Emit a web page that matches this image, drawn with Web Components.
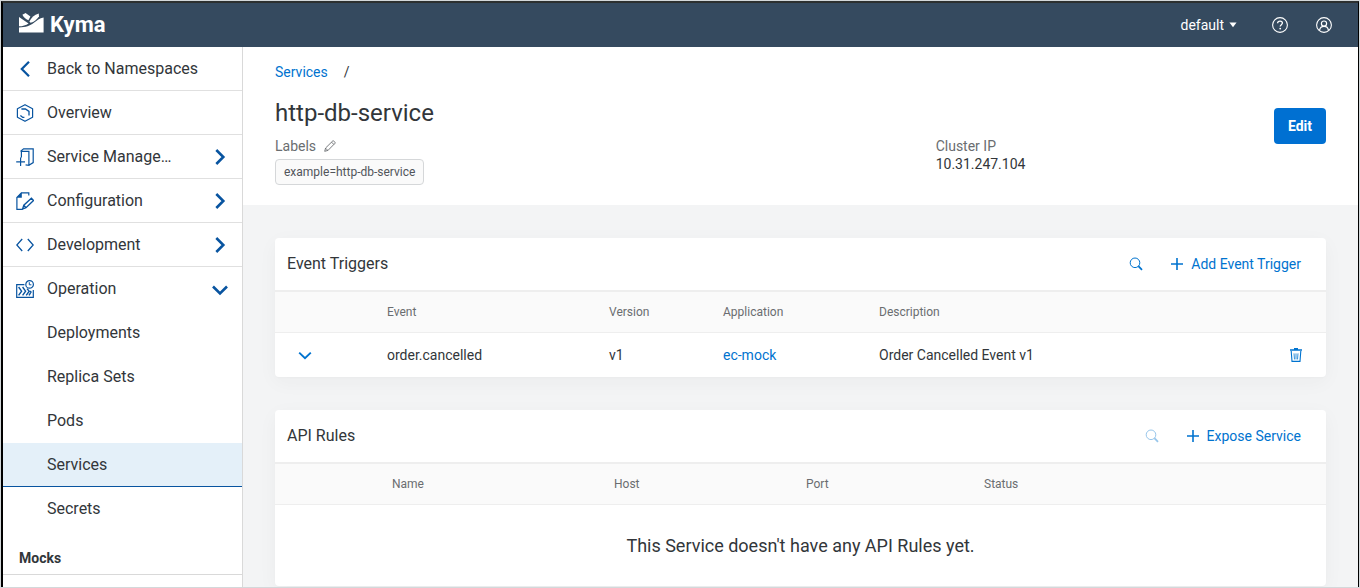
<!DOCTYPE html>
<html lang="en">
<head>
<meta charset="utf-8">
<title>Kyma Console - http-db-service</title>
<style>
  html, body { margin: 0; height: 100%; }
  body { background: #d3d8da; font-family: Roboto, "Noto Sans", sans-serif; font-size: 14px; line-height: 20px; color: #32363a; }
</style>
</head>
<body>
<kyma-app>
  <kyma-topbar slot="top"></kyma-topbar>
  <side-nav slot="nav">
    <nav-item icon="back">Back to Namespaces</nav-item>
    <nav-item icon="overview">Overview</nav-item>
    <nav-item icon="catalog" end="right">Service Manage…</nav-item>
    <nav-item icon="config" end="right">Configuration</nav-item>
    <nav-item icon="code" end="right">Development</nav-item>
    <nav-item icon="operation" end="down" plain>Operation</nav-item>
    <nav-item sub plain>Deployments</nav-item>
    <nav-item sub plain>Replica Sets</nav-item>
    <nav-item sub plain>Pods</nav-item>
    <nav-item sub plain active>Services</nav-item>
    <nav-item sub plain>Secrets</nav-item>
    <nav-heading>Mocks</nav-heading>
  </side-nav>
  <page-header></page-header>
  <page-body>
    <event-triggers></event-triggers>
    <api-rules></api-rules>
  </page-body>
</kyma-app>

<script>
const ICONS = {
  logo: ['0 0 25 20', '<g fill="#fff"><path d="M0 4 9.6 10.4C7 12.4 3.5 13.1 0 13.3Z"/><path d="M3.4 1.8 6.6 0 11.4 3.4 9.4 7.2C6.6 6.2 4.6 4.4 3.4 1.8Z"/><path d="M10.4 8.6C12 4.6 15.4 1.6 19.8.4L20 3.4C18 6.4 15 8.8 11.6 9.8Z"/><path d="M0 14.5C7 14.3 11 12.8 14.6 10 18 7.4 20.4 5 24.6 4.4V19.4H0Z"/></g>'],
  back: ['0 0 18 18', '<path d="M13 1.8 5.8 9l7.2 7.2" fill="none" stroke="currentColor" stroke-width="2.2"/>'],
  overview: ['0 0 18 18', '<path d="M9 .7 16.6 4.7V13.3L9 17.3 1.4 13.3V4.7Z" fill="none" stroke="currentColor" stroke-width="1.2" stroke-linejoin="round"/><path d="M5.4 5H9.4L13 7.4V11.6M4.4 11.4 6.8 13.4H8.4" fill="none" stroke="currentColor" stroke-width="1.3"/>'],
  catalog: ['0 0 18 18', '<path d="M5.4 9.6V3.4H12.9V17.3L9.6 16.9M4.4 3.4 7.6.8H17.2V14.6L12.9 17.3M4.6 9.6V18M.2 13.9H9" fill="none" stroke="currentColor" stroke-width="1.2"/>'],
  config: ['0 0 18 18', '<path d="M6.6 17.3H.9V5.4L5.4.8H12.8V3.4" fill="none" stroke="currentColor" stroke-width="1.2"/><path d="M.6 5.8 5.8.4V5.8Z" fill="currentColor"/><path d="M6.6 17 7.8 13.2 15.4 6.2 17.5 8.5 10 15.6ZM7.8 13.2 10 15.6" fill="none" stroke="currentColor" stroke-width="1.3"/>'],
  code: ['0 0 18 18', '<path d="M6.2 3 .8 9 6.2 15M11.8 3l5.4 6-5.4 6" fill="none" stroke="currentColor" stroke-width="1.3"/>'],
  operation: ['0 0 18 18', '<path d="M8.4 4.6H.7V17.4H17.3V10" fill="none" stroke="currentColor" stroke-width="1.2"/><path d="m2.6 7 3 4.2-3 4.2M6.6 7l3 4.2-3 4.2M11 8.6l2.2 2.6-3 4.2M14.2 11l.8 1-2 3.4" fill="none" stroke="currentColor" stroke-width="1.4"/><circle cx="13.6" cy="4.4" r="3.8" fill="none" stroke="currentColor" stroke-width="1.2"/><path d="M13.3 2.2V4.8H15.4" fill="none" stroke="currentColor"/>'],
  right: ['0 0 20 20', '<path d="M6.3 3 13.3 10l-7 7" fill="none" stroke="currentColor" stroke-width="2.6"/>'],
  down: ['0 0 20 20', '<path d="M3 7.5 10 14.5l7-7" fill="none" stroke="currentColor" stroke-width="2.6"/>'],
  caret: ['0 0 8 6', '<path d="M.4.6H7.6L4 5.2Z" fill="currentColor"/>'],
  help: ['0 0 16 16', '<circle cx="8" cy="8" r="7.4" fill="none" stroke="currentColor" stroke-width="1.1"/><path d="M5.6 6.2C5.7 4.8 6.6 4.1 8 4.1S10.4 4.9 10.4 6.1C10.4 7.7 8.2 7.7 8.2 9.6" fill="none" stroke="currentColor" stroke-width="1.3"/><circle cx="8.2" cy="11.6" r=".9" fill="currentColor"/>'],
  user: ['0 0 16 16', '<circle cx="8" cy="8" r="7.4" fill="none" stroke="currentColor" stroke-width="1.1"/><circle cx="8" cy="6.6" r="2.6" fill="none" stroke="currentColor" stroke-width="1.2"/><path d="M3.6 13.2C4 10.8 5.6 9.4 8 9.4S12 10.8 12.4 13.2" fill="none" stroke="currentColor" stroke-width="1.2"/>'],
  pencil: ['0 0 12 12', '<path d="M.7 11.3 1.6 8 8.8.9C9.6.4 11.6 2.4 11.1 3.2L4 10.4ZM7.6 2.2 9.8 4.4M1.6 8.2 3.8 10.4" fill="none" stroke="currentColor" stroke-width=".9"/>'],
  search: ['0 0 14 14', '<circle cx="6" cy="5.8" r="4.8" fill="none" stroke="currentColor" stroke-width="1"/><path d="M9.4 9.2 13 12.8" stroke="currentColor" stroke-width="1.8"/>'],
  plus: ['0 0 12 12', '<path d="M6 0V12M0 6H12" stroke="currentColor" stroke-width="1.6"/>'],
  expand: ['0 0 14 14', '<path d="M1.2 4.6 7 10.2l5.8-5.6" fill="none" stroke="currentColor" stroke-width="1.9"/>'],
  trash: ['0 0 14 16', '<path d="M1 3H13M5 1.8H9" stroke="currentColor" stroke-width="1.4" fill="none"/><path d="M2.2 4 3 14.4H11L11.8 4" fill="none" stroke="currentColor" stroke-width="1.1"/><path d="M5 6.4 5.5 12.4M7 6.4v6M9 6.4 8.5 12.4" stroke="currentColor" stroke-width=".8"/>']
};

function define(name, render) {
  customElements.define(name, class extends HTMLElement {
    constructor() {
      super();
      this.attachShadow({ mode: 'open' });
    }
    connectedCallback() {
      this.shadowRoot.innerHTML = render(this);
    }
  });
}

const CONTROLS = `
  * { box-sizing: border-box; }
  a { color: #0073cf; text-decoration: none; }
  button { font: inherit; color: #0073cf; background: none; border: 0; padding: 0; margin: 0; cursor: pointer; }
`;

const TABLE = `
  table { width: 100%; border-collapse: separate; border-spacing: 0; table-layout: fixed; }
  th, td { padding: 0 12px; text-align: left; vertical-align: middle; }
  th { height: 41px; background: #fafafa; border-bottom: 1px solid #eee; font-size: 12px; font-weight: 400; line-height: 16px; color: #6a6d70; }
  td { height: 44px; font-size: 14px; }
`;

define('ui-icon', el => {
  const [box, body] = ICONS[el.getAttribute('name')];
  const [, , w, h] = box.split(' ');
  return `<style>:host { display: inline-flex; flex: none; } svg { display: block; }</style>
    <svg viewBox="${box}" width="${w}" height="${h}" aria-hidden="true">${body}</svg>`;
});

define('kyma-app', () => `
  <style>
    :host { box-sizing: border-box; display: flex; flex-direction: column; height: 100vh; padding: 1px; overflow: hidden; }
    .frame { flex: 1; min-height: 0; display: flex; flex-direction: column; overflow: hidden; border: solid #000; border-width: 2px 1px 0 2px; border-top-color: #2c3030; background: #f3f4f5; }
    .columns { flex: 1; min-height: 0; display: flex; }
    main { flex: 1; min-width: 0; overflow: hidden; }
  </style>
  <div class="frame">
    <slot name="top"></slot>
    <div class="columns">
      <slot name="nav"></slot>
      <main><slot></slot></main>
    </div>
  </div>`);

define('kyma-topbar', () => `
  <style>
    ${CONTROLS}
    :host { display: block; flex: none; }
    header { height: 44px; display: flex; align-items: center; padding: 0 12px 0 16px; background: #354a5f; color: #fff; }
    .brand { display: flex; align-items: center; gap: 6px; margin-right: auto; color: #fff; font-size: 22px; font-weight: 700; }
    .brand ui-icon { margin-bottom: 4px; }
    .picker { display: flex; align-items: center; margin-right: 21px; position: relative; }
    select { appearance: none; field-sizing: content; border: 0; margin: 0; padding: 0 13px 0 0; background: transparent; color: inherit; font: inherit; }
    .picker ui-icon { position: absolute; right: 0; pointer-events: none; }
    button { width: 44px; height: 44px; display: flex; align-items: center; justify-content: center; color: #fff; }
  </style>
  <header>
    <a class="brand" href="#home"><ui-icon name="logo"></ui-icon>Kyma</a>
    <div class="picker">
      <select aria-label="Namespace"><option>default</option></select>
      <ui-icon name="caret"></ui-icon>
    </div>
    <button aria-label="Help"><ui-icon name="help"></ui-icon></button>
    <button aria-label="Profile"><ui-icon name="user"></ui-icon></button>
  </header>`);

define('side-nav', () => `
  <style>
    :host { box-sizing: border-box; flex: none; width: 240px; display: block; overflow: hidden; background: #fff; border-right: 1px solid #d9d9d9; }
    nav { display: flex; flex-direction: column; }
  </style>
  <nav><slot></slot></nav>`);

define('nav-item', el => `
  <style>
    ${CONTROLS}
    :host { display: block; }
    a { height: 44px; display: flex; align-items: center; gap: 13px; padding: 0 12px 0 13px; border-bottom: 1px solid #e0e0e0; color: #32363a; font-size: 16px; white-space: nowrap; }
    ui-icon { color: #0854a0; }
    span { flex: 1; }
    :host([plain]) a { border-bottom-color: transparent; }
    :host([sub]) a { padding-left: 44px; }
    :host([active]) a { background: #e4f0f9; border-bottom-color: #0854a0; }
  </style>
  <a href="#nav"${el.hasAttribute('active') ? ' aria-current="page"' : ''}>
    ${el.hasAttribute('icon') ? `<ui-icon name="${el.getAttribute('icon')}"></ui-icon>` : ''}
    <span><slot></slot></span>
    ${el.hasAttribute('end') ? `<ui-icon name="${el.getAttribute('end')}"></ui-icon>` : ''}
  </a>`);

define('nav-heading', () => `
  <style>
    :host { display: block; }
    h2 { box-sizing: border-box; height: 44px; margin: 0; padding: 17px 16px 0; border-bottom: 1px solid #d9d9d9; font-size: 14px; font-weight: 700; line-height: 20px; }
  </style>
  <h2><slot></slot></h2>`);

define('page-header', () => `
  <style>
    ${CONTROLS}
    :host { display: block; background: #fff; }
    header { padding: 15px 32px 20px; }
    .crumbs { display: flex; gap: 16px; margin-bottom: 15px; }
    .row { display: flex; align-items: flex-start; gap: 8px; }
    .info { flex: 1; display: grid; grid-template-columns: 2fr 1fr; row-gap: 8px; }
    h1 { grid-column: 1 / -1; margin: 0; font-size: 24px; font-weight: 400; line-height: 32px; }
    .field { line-height: 18px; }
    .name { display: flex; align-items: center; gap: 8px; color: #6a6d70; }
    .name button { color: #6a6d70; display: flex; }
    .tag { display: inline-block; margin-top: 4px; padding: 3px 8px; border: 1px solid #d5d7d9; border-radius: 4px; background: #fafafa; color: #51555a; font-size: 12px; }
    .edit { min-width: 52px; margin-top: 11px; height: 36px; padding: 0 12px; border-radius: 4px; background: #0070d2; color: #fff; font-weight: 700; }
  </style>
  <header>
    <nav class="crumbs" aria-label="Breadcrumb"><a href="#services">Services</a><span>/</span></nav>
    <div class="row">
      <div class="info">
        <h1>http-db-service</h1>
        <div class="field">
          <div class="name">Labels <button aria-label="Edit labels"><ui-icon name="pencil"></ui-icon></button></div>
          <div class="tag">example=http-db-service</div>
        </div>
        <div class="field">
          <div class="name">Cluster IP</div>
          <div>10.31.247.104</div>
        </div>
      </div>
      <button class="edit">Edit</button>
    </div>
  </header>`);

define('page-body', () => `
  <style>:host { display: flex; flex-direction: column; gap: 33px; padding: 33px 32px; }</style>
  <slot></slot>`);

define('data-panel', () => `
  <style>
    :host { display: block; background: #fff; border-radius: 4px; box-shadow: 0 5px 20px rgba(50, 54, 58, .04), 0 1px 2px rgba(50, 54, 58, .02); overflow: hidden; }
    header { height: 52px; display: flex; align-items: center; padding: 0 25px 0 12px; border-bottom: 2px solid #eee; }
    h3 { margin: 0 auto 0 0; font-size: 16px; font-weight: 400; }
  </style>
  <header><h3><slot name="title"></slot></h3><slot name="actions"></slot></header>
  <slot></slot>`);

define('panel-actions', el => `
  <style>
    ${CONTROLS}
    :host { display: flex; align-items: center; gap: 28px; }
    button { display: flex; align-items: center; gap: 8px; }
    button:disabled { opacity: .4; }
  </style>
  <button aria-label="Search"${el.hasAttribute('nosearch') ? ' disabled' : ''}><ui-icon name="search"></ui-icon></button>
  <button><ui-icon name="plus"></ui-icon><slot></slot></button>`);

define('event-triggers', () => `
  <style>
    ${CONTROLS}
    ${TABLE}
    :host { display: block; }
    td button { display: flex; }
    .expand { padding-left: 11px; }
    .remove { margin-left: auto; padding-right: 11px; }
  </style>
  <data-panel>
    <span slot="title">Event Triggers</span>
    <panel-actions slot="actions">Add Event Trigger</panel-actions>
    <table>
      <colgroup><col style="width:100px"><col style="width:222px"><col style="width:114px"><col style="width:156px"><col><col style="width:80px"></colgroup>
      <thead><tr><th></th><th>Event</th><th>Version</th><th>Application</th><th>Description</th><th></th></tr></thead>
      <tbody><tr>
        <td><button class="expand" aria-label="Expand"><ui-icon name="expand"></ui-icon></button></td>
        <td>order.cancelled</td><td>v1</td><td><a href="#ec-mock">ec-mock</a></td><td>Order Cancelled Event v1</td>
        <td><button class="remove" aria-label="Delete"><ui-icon name="trash"></ui-icon></button></td>
      </tr></tbody>
    </table>
  </data-panel>`);

define('api-rules', () => `
  <style>
    ${CONTROLS}
    ${TABLE}
    :host { display: block; }
    td { height: 81px; text-align: center; font-size: 18px; }
  </style>
  <data-panel>
    <span slot="title">API Rules</span>
    <panel-actions slot="actions" nosearch>Expose Service</panel-actions>
    <table>
      <colgroup><col style="width:105px"><col style="width:222px"><col style="width:192px"><col style="width:178px"><col></colgroup>
      <thead><tr><th></th><th>Name</th><th>Host</th><th>Port</th><th>Status</th></tr></thead>
      <tbody><tr><td colspan="5">This Service doesn't have any API Rules yet.</td></tr></tbody>
    </table>
  </data-panel>`);
</script>
</body>
</html>
